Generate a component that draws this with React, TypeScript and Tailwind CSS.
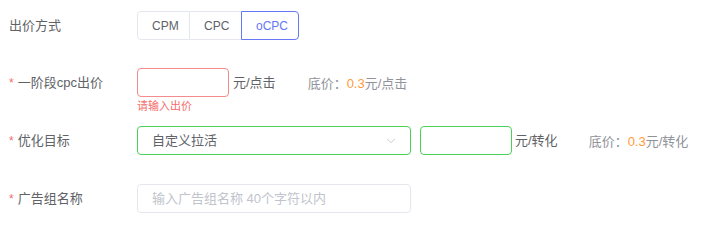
import { ChevronDown } from "lucide-react";

const font = { fontFamily: '"Liberation Sans", "Noto Sans CJK SC", sans-serif' };

function Label({ text, required }: { text: string; required?: boolean }) {
  return (
    <div className="flex w-[137px] shrink-0 items-center pl-[9px] text-[13px] text-[#606266]">
      {required ? <span className="mr-[4px] text-[12px] text-[#f56c6c]">*</span> : null}
      <span>{text}</span>
    </div>
  );
}

function Floor({ unit }: { unit: string }) {
  return (
    <span className="text-[13px] text-[#909399]">
      底价：<span className="text-[#ff9a3c]">0.3</span>
      {unit}
    </span>
  );
}

export default function App() {
  const modes = ["CPM", "CPC", "oCPC"];
  const active = "oCPC";

  return (
    <div className="h-[228px] w-[719px] bg-white pt-[11px]" style={font}>
      {/* 出价方式 */}
      <div className="flex h-[29px] items-center">
        <Label text="出价方式" />
        <div className="flex h-[29px] text-[12px]">
          {modes.map((m, i) => (
            <button
              key={m}
              className={
                "h-full border px-[14px] " +
                (i === 0 ? "w-[53px] rounded-l-[4px] " : "") +
                (i === 1 ? "w-[52px] border-l-0 " : "") +
                (i === 2 ? "w-[58px] -ml-px rounded-r-[4px] " : "") +
                (m === active
                  ? "z-10 border-[#6576f6] text-[#6576f6]"
                  : "border-[#e4e7ed] text-[#606266]")
              }
            >
              {m}
            </button>
          ))}
        </div>
      </div>

      {/* 一阶段cpc出价 */}
      <div className="mt-[28px] flex h-[29px] items-center">
        <Label text="一阶段cpc出价" required />
        <div className="relative h-full">
          <input className="h-full w-[92px] rounded-[4px] border border-[#f58b8b] px-[10px] text-[13px] outline-none" />
          <div className="absolute left-0 top-[31px] whitespace-nowrap text-[11px] leading-[14px] text-[#f56c6c]">
            请输入出价
          </div>
        </div>
        <span className="ml-[4px] text-[13px] text-[#606266]">元/点击</span>
        <span className="ml-[32px]">
          <Floor unit="元/点击" />
        </span>
      </div>

      {/* 优化目标 */}
      <div className="mt-[29px] flex h-[29px] items-center">
        <Label text="优化目标" required />
        <div className="flex h-full w-[274px] items-center justify-between rounded-[4px] border border-[#4cd158] pl-[14px] pr-[12px] text-[13px] text-[#606266]">
          <span>自定义拉活</span>
          <ChevronDown size={14} strokeWidth={1.5} className="text-[#c0c4cc]" />
        </div>
        <input className="ml-[9px] h-full w-[92px] rounded-[4px] border border-[#4cd158] px-[10px] text-[13px] outline-none" />
        <span className="ml-[3px] text-[13px] text-[#606266]">元/转化</span>
        <span className="ml-[31px]">
          <Floor unit="元/转化" />
        </span>
      </div>

      {/* 广告组名称 */}
      <div className="mt-[29px] flex h-[29px] items-center">
        <Label text="广告组名称" required />
        <input
          placeholder="输入广告组名称 40个字符以内"
          className="h-full w-[274px] rounded-[4px] border border-[#e4e7ed] px-[14px] text-[13px] text-[#606266] outline-none placeholder:text-[#c0c4cc]"
        />
      </div>
    </div>
  );
}
